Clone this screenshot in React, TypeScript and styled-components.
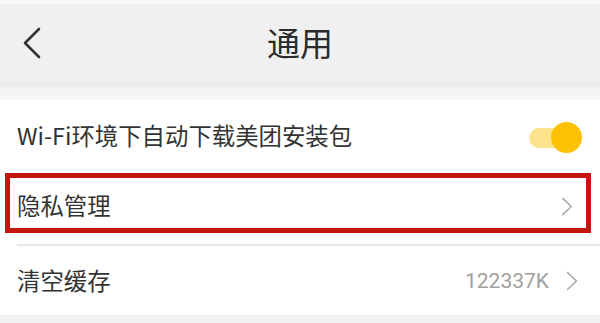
import * as React from 'react';
import styled, { createGlobalStyle } from 'styled-components';

const GlobalStyle = createGlobalStyle`
  html, body {
    margin: 0;
    padding: 0;
    background: #f1f1f1;
  }
  body {
    font-family: "Noto Sans CJK SC", "Noto Sans", sans-serif;
    color: #333;
  }
`;

const Page = styled.div`
  width: 600px;
  height: 323px;
  overflow: hidden;
  display: flex;
  flex-direction: column;
  background: #f1f1f1;
  border-top: 4px solid #f8f8f8;
  box-sizing: border-box;
`;

const Header = styled.div`
  height: 78px;
  flex: none;
  display: flex;
  align-items: center;
  justify-content: center;
  position: relative;
  background: #f0f0f0;
`;

const BackButton = styled.div`
  position: absolute;
  left: 22px;
  top: 23px;
  width: 20px;
  height: 32px;
`;

const Title = styled.div`
  font-size: 33px;
  line-height: 1;
  color: #2b2b2b;
  margin-top: -2px;
`;

const Gap = styled.div`
  height: 18px;
  flex: none;
  background: linear-gradient(#e9e9e9, #f4f4f4 40%, #f7f7f7);
`;

const List = styled.div`
  background: #fff;
  height: 215px;
  flex: none;
  display: flex;
  flex-direction: column;
`;

const Row = styled.div<{ $h: number }>`
  height: ${p => p.$h}px;
  flex: none;
  display: flex;
  align-items: center;
  padding: 0 22px 0 17px;
  box-sizing: border-box;
`;

const Label = styled.div`
  flex: 1;
  font-size: 23.4px;
  line-height: 1;
  color: #333;
  white-space: nowrap;
`;

const Value = styled.div`
  font-size: 21px;
  line-height: 1;
  color: #a0a0a0;
  margin-right: 17px;
  font-family: "Roboto", "Noto Sans", sans-serif;
`;

const Highlight = styled.div`
  margin: 1px 9px 0 5px;
  height: 60px;
  flex: none;
  border: 5px solid #c2170f;
  box-sizing: border-box;
  display: flex;
  align-items: center;
  padding: 6px 13px 0 7px;
`;

const Divider = styled.div<{ $top: number }>`
  margin-top: ${p => p.$top}px;
  margin-left: 17px;
  height: 2px;
  flex: none;
  background: #e8e8e8;
`;

const Track = styled.div`
  position: relative;
  width: 48px;
  height: 20px;
  border-radius: 10px;
  background: #fde48c;
  margin-top: 4px;
  margin-right: 1px;
`;

const Knob = styled.div`
  position: absolute;
  right: -5px;
  top: -6px;
  width: 31px;
  height: 31px;
  border-radius: 50%;
  background: #ffc105;
`;

const Chevron = ({ h = 20 }: { h?: number }) => (
  <svg width="12" height={h} viewBox="0 0 12 20" fill="none">
    <path d="M1.5 1.5 L10.5 10 L1.5 18.5" stroke="#a8a8a8" strokeWidth="1.6" strokeLinecap="round" strokeLinejoin="round" />
  </svg>
);

export default function App() {
  return (
    <>
      <GlobalStyle />
      <Page>
        <Header>
          <BackButton>
            <svg width="20" height="32" viewBox="0 0 20 32" fill="none">
              <path d="M17 2 L3 16 L17 30" stroke="#333" strokeWidth="2.6" strokeLinecap="round" strokeLinejoin="round" />
            </svg>
          </BackButton>
          <Title>通用</Title>
        </Header>
        <Gap />
        <List>
          <Row $h={72}>
            <Label>Wi-Fi环境下自动下载美团安装包</Label>
            <Track>
              <Knob />
            </Track>
          </Row>
          <Highlight>
            <Label>隐私管理</Label>
            <Chevron h={19} />
          </Highlight>
          <Divider $top={11} />
          <Row $h={70}>
            <Label>清空缓存</Label>
            <Value>122337K</Value>
            <Chevron h={22} />
          </Row>
        </List>
      </Page>
    </>
  );
}
